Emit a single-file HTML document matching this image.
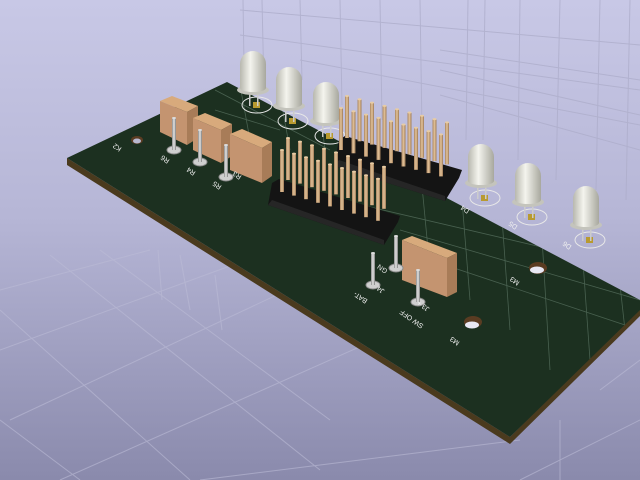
<!DOCTYPE html>
<html><head><meta charset="utf-8"><style>
html,body{margin:0;padding:0;width:640px;height:480px;overflow:hidden}
svg{display:block}
text{font-family:"Liberation Sans",sans-serif;fill:#f0f0f0;font-size:7px}
</style></head><body>
<svg width="640" height="480" viewBox="0 0 640 480" xmlns="http://www.w3.org/2000/svg">
<defs>
<linearGradient id="bg" x1="0" y1="0" x2="0" y2="1">
<stop offset="0" stop-color="#c8c8e6"/><stop offset="0.45" stop-color="#b6b6d6"/><stop offset="1" stop-color="#8a8aac"/>
</linearGradient>
<linearGradient id="pin" x1="0" y1="0" x2="1" y2="0">
<stop offset="0" stop-color="#a88460"/><stop offset="0.5" stop-color="#e4c49a"/><stop offset="1" stop-color="#9c7854"/>
</linearGradient>
<linearGradient id="led" x1="0" y1="0" x2="1" y2="0">
<stop offset="0" stop-color="#b8b8ae"/><stop offset="0.4" stop-color="#f4f4ee"/><stop offset="1" stop-color="#a8a89e"/>
</linearGradient>
<linearGradient id="post" x1="0" y1="0" x2="1" y2="0">
<stop offset="0" stop-color="#8a8a8a"/><stop offset="0.5" stop-color="#e6e6e6"/><stop offset="1" stop-color="#7a7a7a"/>
</linearGradient>
<clipPath id="bc"><polygon points="67,158 227,82 640,300 640,310 510,437"/></clipPath>
<g id="p"><rect x="-2" y="-42" width="4" height="42" fill="url(#pin)"/><ellipse cx="0" cy="-42" rx="2" ry="1" fill="#e8cca4"/></g>
<g id="led1">
<ellipse cx="4" cy="54" rx="15" ry="8" fill="none" stroke="#e8e8e8" stroke-width="1"/>
<rect x="0" y="51" width="7" height="6" fill="#b89a30"/>
<rect x="-4" y="40" width="1.5" height="15" fill="#ccc"/><rect x="4" y="40" width="1.5" height="15" fill="#ccc"/>
<ellipse cx="0" cy="39" rx="16" ry="5" fill="#c4c4bc"/>
<path d="M-13 37 L-13 13 A13 13 0 0 1 13 13 L13 37 A13 4 0 0 1 -13 37Z" fill="url(#led)"/>
</g>
<g id="sp">
<ellipse cx="0" cy="0" rx="7" ry="4" fill="#cfcfcf" stroke="#8a8a8a"/>
<rect x="-2" y="-32" width="4" height="32" fill="url(#post)"/>
<ellipse cx="0" cy="-32" rx="2" ry="1" fill="#ddd"/>
</g>
</defs>
<rect width="640" height="480" fill="url(#bg)"/>
<g stroke="#aeaecb" stroke-width="1" opacity="0.8">
<line x1="243" y1="0" x2="245" y2="130"/><line x1="262" y1="0" x2="264" y2="90"/><line x1="300" y1="0" x2="302" y2="80"/>
<line x1="340" y1="0" x2="342" y2="105"/><line x1="380" y1="0" x2="382" y2="120"/><line x1="420" y1="0" x2="422" y2="130"/>
<line x1="468" y1="0" x2="466" y2="140"/><line x1="485" y1="0" x2="483" y2="140"/><line x1="520" y1="0" x2="518" y2="160"/>
<line x1="560" y1="0" x2="556" y2="180"/><line x1="600" y1="0" x2="596" y2="190"/><line x1="630" y1="0" x2="626" y2="200"/>
<line x1="240" y1="10" x2="640" y2="45"/><line x1="240" y1="35" x2="640" y2="90"/><line x1="300" y1="60" x2="640" y2="125"/>
<line x1="440" y1="50" x2="640" y2="80"/><line x1="440" y1="70" x2="640" y2="115"/><line x1="440" y1="95" x2="640" y2="150"/>
</g>
<g stroke="#bcbcd6" stroke-width="1" opacity="0.6">
<line x1="0" y1="290" x2="150" y2="250"/><line x1="0" y1="350" x2="260" y2="255"/><line x1="10" y1="420" x2="330" y2="270"/>
<line x1="60" y1="480" x2="420" y2="320"/><line x1="200" y1="480" x2="520" y2="440"/><line x1="520" y1="480" x2="640" y2="420"/>
<line x1="0" y1="310" x2="190" y2="480"/><line x1="50" y1="255" x2="320" y2="470"/>
<line x1="100" y1="250" x2="330" y2="420"/><line x1="0" y1="420" x2="80" y2="480"/>
<line x1="158" y1="250" x2="162" y2="300"/><line x1="180" y1="255" x2="190" y2="310"/><line x1="215" y1="275" x2="222" y2="330"/>
<line x1="560" y1="420" x2="560" y2="480"/><line x1="600" y1="390" x2="640" y2="360"/>
</g>
<polygon points="67,158 510,437 640,308 640,316 510,444 67,165" fill="#4a3a1e"/>
<polygon points="67,158 227,82 640,300 640,310 510,437" fill="#1c3020"/>
<g stroke="#6f8a78" stroke-width="0.8" opacity="0.55" clip-path="url(#bc)">
<line x1="460" y1="175" x2="470" y2="300"/><line x1="500" y1="190" x2="510" y2="330"/><line x1="540" y1="205" x2="550" y2="370"/>
<line x1="580" y1="220" x2="590" y2="360"/><line x1="615" y1="240" x2="625" y2="330"/><line x1="420" y1="165" x2="430" y2="270"/>
<line x1="400" y1="230" x2="640" y2="300"/><line x1="430" y1="260" x2="640" y2="330"/><line x1="340" y1="200" x2="640" y2="270"/>
<line x1="215" y1="90" x2="330" y2="150"/><line x1="215" y1="110" x2="280" y2="130"/><line x1="240" y1="85" x2="250" y2="140"/>
<line x1="280" y1="95" x2="290" y2="150"/><line x1="320" y1="110" x2="325" y2="150"/>
</g>
<ellipse cx="137" cy="140" rx="6" ry="4" fill="#5a3c22"/><ellipse cx="137" cy="141" rx="4" ry="2.5" fill="#b8b8d0"/>
<ellipse cx="538" cy="268" rx="9" ry="6" fill="#5a3c22"/><ellipse cx="537" cy="270" rx="7" ry="3.5" fill="#e8e8f4"/>
<ellipse cx="473" cy="322" rx="9" ry="6" fill="#5a3c22"/><ellipse cx="472" cy="325" rx="7" ry="3.5" fill="#e8e8f4"/>
<use href="#led1" x="253" y="51"/>
<use href="#led1" x="289" y="67"/>
<use href="#led1" x="326" y="82"/>
<polygon points="339,140 345,136 462,170 459,178 445,201 334,166" fill="#141414"/>
<polygon points="334,166 445,201 445,196 339,160" fill="#262626"/>
<g>
<use href="#p" x="347" y="138"/><use href="#p" x="359.5" y="141.3"/><use href="#p" x="372" y="144.6"/><use href="#p" x="384.5" y="147.9"/><use href="#p" x="397" y="151.2"/><use href="#p" x="409.5" y="154.5"/><use href="#p" x="422" y="157.8"/><use href="#p" x="434.5" y="161.1"/><use href="#p" x="447" y="164.4"/>
<use href="#p" x="341" y="150"/><use href="#p" x="353.5" y="153.3"/><use href="#p" x="366" y="156.6"/><use href="#p" x="378.5" y="159.9"/><use href="#p" x="391" y="163.2"/><use href="#p" x="403.5" y="166.5"/><use href="#p" x="416" y="169.8"/><use href="#p" x="428.5" y="173.1"/><use href="#p" x="441" y="176.4"/>
</g>
<g>
<polygon points="160,101 172,96 198,106 187,112" fill="#d8aa7c"/>
<polygon points="160,101 187,112 187,145 160,132" fill="#c49470"/>
<polygon points="187,112 198,106 198,138 187,145" fill="#a87c58"/>
<polygon points="193,118 205,113 232,124 221,130" fill="#d8aa7c"/>
<polygon points="193,118 221,130 221,163 193,150" fill="#c49470"/>
<polygon points="221,130 232,124 232,156 221,163" fill="#a87c58"/>
<polygon points="230,134 242,129 272,142 262,148" fill="#d8aa7c"/>
<polygon points="230,134 262,148 262,183 230,170" fill="#c49470"/>
<polygon points="262,148 272,142 272,176 262,183" fill="#a87c58"/>
</g>
<use href="#sp" x="174" y="150"/><use href="#sp" x="200" y="162"/><use href="#sp" x="226" y="177"/>
<polygon points="272,183 279,179 400,216 398,222 384,245 268,205" fill="#141414"/>
<polygon points="268,205 384,245 384,240 272,200" fill="#262626"/>
<g>
<use href="#p" x="288" y="180"/><use href="#p" x="300" y="183.6"/><use href="#p" x="312" y="187.2"/><use href="#p" x="324" y="190.8"/><use href="#p" x="336" y="194.4"/><use href="#p" x="348" y="198"/><use href="#p" x="360" y="201.6"/><use href="#p" x="372" y="205.2"/><use href="#p" x="384" y="208.8"/>
<use href="#p" x="282" y="192"/><use href="#p" x="294" y="195.6"/><use href="#p" x="306" y="199.2"/><use href="#p" x="318" y="202.8"/><use href="#p" x="330" y="206.4"/><use href="#p" x="342" y="210"/><use href="#p" x="354" y="213.6"/><use href="#p" x="366" y="217.2"/><use href="#p" x="378" y="220.8"/>
</g>
<use href="#led1" x="481" y="144"/>
<use href="#led1" x="528" y="163"/>
<use href="#led1" x="586" y="186"/>
<polygon points="402,240 412,236 457,253 447,258" fill="#d8aa7c"/>
<polygon points="402,240 447,258 447,297 402,280" fill="#c49470"/>
<polygon points="447,258 457,253 457,292 447,297" fill="#a87c58"/>
<use href="#sp" x="396" y="268"/><use href="#sp" x="373" y="285"/><use href="#sp" x="418" y="302"/>
<g>
<text transform="translate(122,148) rotate(-145)">K2</text>
<text transform="translate(170,160) rotate(-145)">R6</text>
<text transform="translate(196,172) rotate(-145)">R4</text>
<text transform="translate(222,186) rotate(-145)">R5</text>
<text transform="translate(242,176) rotate(-145)">R3</text>
<text transform="translate(388,270) rotate(-145)">GN</text>
<text transform="translate(385,290) rotate(-145)">J4</text>
<text transform="translate(368,300) rotate(-145)">BAT-</text>
<text transform="translate(430,308) rotate(-145)">J3 +</text>
<text transform="translate(424,325) rotate(-145)">SW OFF</text>
<text transform="translate(460,342) rotate(-145)">M3</text>
<text transform="translate(520,282) rotate(-145)">M3</text>
<text transform="translate(470,210) rotate(-145)">D4</text>
<text transform="translate(518,226) rotate(-145)">D5</text>
<text transform="translate(572,246) rotate(-145)">D6</text>
</g>
</svg>
</body></html>
